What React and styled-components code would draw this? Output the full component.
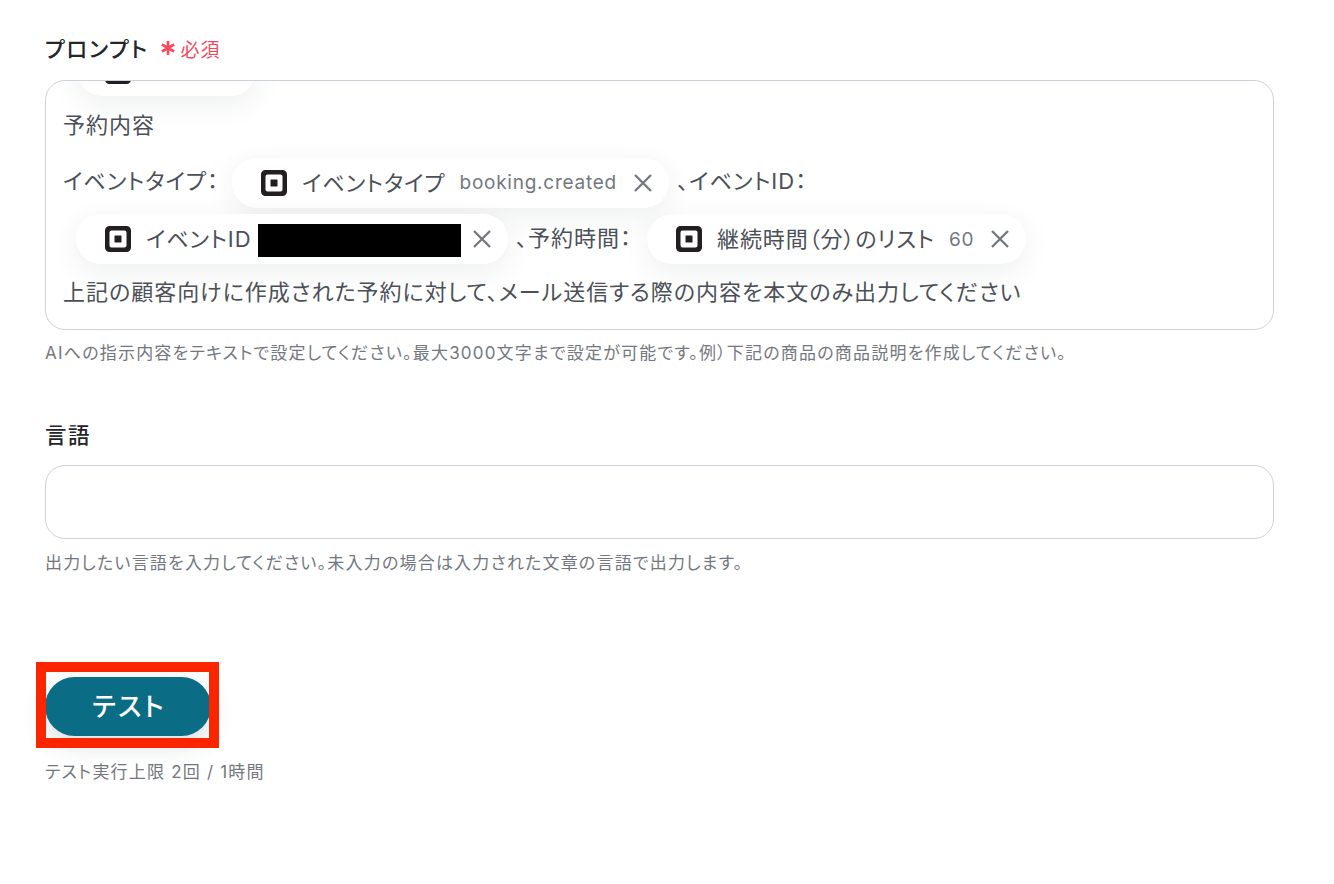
import React from 'react';
import styled, { createGlobalStyle } from 'styled-components';

const Global = createGlobalStyle`
  html, body { margin: 0; background: #fff; }
  body { font-family: Inter, "Noto Sans CJK JP", sans-serif; font-feature-settings: "palt"; }
`;

const Page = styled.main`
  width: 1229px;
  padding: 35px 0 0 45px;
`;

const Field = styled.section`
  margin-bottom: ${p => p.$gap}px;
`;

const LabelRow = styled.div`
  display: flex;
  align-items: center;
  height: 28px;
  margin-bottom: ${p => p.$gap}px;
  gap: 11px;
`;

const Label = styled.label`
  padding-bottom: 3px;
  font-size: 21.5px;
  font-weight: 500;
  letter-spacing: 1.6px;
  color: #23262a;
`;

const Required = styled.span`
  display: flex;
  align-items: center;
  gap: 5px;
  padding-bottom: 2px;
  font-size: 19px;
  letter-spacing: 1px;
  color: #f8485f;
`;

const Editor = styled.div`
  box-sizing: border-box;
  height: ${p => p.$height}px;
  border: 1px solid #cdd2da;
  border-radius: 20px;
  overflow: hidden;
  padding: 0 17px;
`;

const Line = styled.div`
  display: flex;
  align-items: center;
  height: ${p => p.$height}px;
  font-size: 22px;
  letter-spacing: 1px;
  color: #4b5057;
  white-space: nowrap;
`;

// the CJK glyphs sit low in their line box, so text is lifted a little against the chips
const LineText = styled.span`
  padding-bottom: ${p => p.$lift}px;
`;

const Chip = styled.span`
  display: inline-flex;
  align-items: center;
  box-sizing: border-box;
  height: 50px;
  width: ${p => p.$width}px;
  margin: 0 ${p => p.$right || 8}px 0 ${p => p.$left || 14}px;
  padding-left: 29px;
  border-radius: 25px;
  background: #fff;
  box-shadow: 0 8px 28px rgba(40, 50, 60, 0.08);
  font-size: 22px;
  letter-spacing: 0.9px;
  flex: none;
`;

const ClippedChip = styled(Chip)`
  display: flex;
  margin: -35px 0 0 14px;
  padding-left: 28px;
`;

const ChipName = styled.span`
  margin-left: 15px;
  padding-bottom: 4px;
  color: #4b5057;
`;

const ChipValue = styled.span`
  margin-left: 14px;
  font-size: 19px;
  letter-spacing: 0.75px;
  color: #73787e;
`;

const Redacted = styled.span`
  width: 203px;
  height: 33px;
  margin: 3px 0 0 7px;
  background: #000;
`;

const Close = styled.svg`
  width: 18px;
  height: 18px;
  margin-left: auto;
  margin-right: 17px;
  flex: none;
  stroke: #73787e;
  stroke-width: 2.3;
  fill: none;
`;

const Hint = styled.p`
  margin: ${p => p.$top || 12}px 0 0;
  font-size: 17px;
  line-height: 22px;
  letter-spacing: 1.2px;
  color: #73787e;
`;

const ButtonWrap = styled.div`
  position: relative;
  width: 166px;
`;

const TestButton = styled.button`
  display: block;
  width: 166px;
  height: 59px;
  padding: 0 0 4px 2px;
  border: 0;
  border-radius: 30px;
  background: #0a6c85;
  box-shadow: 0 8px 24px rgba(40, 60, 70, 0.18);
  color: #fff;
  font: 500 26px Inter, "Noto Sans CJK JP", sans-serif;
  font-feature-settings: "palt";
  letter-spacing: 2.2px;
`;

const Highlight = styled.div`
  position: absolute;
  left: -9px;
  top: -15px;
  width: 183px;
  height: 86px;
  box-sizing: border-box;
  border: 10px solid #fb2600;
  pointer-events: none;
`;

const SquareLogo = () => (
  <svg width="26" height="26" viewBox="0 0 26 26" style={{ flex: 'none' }}>
    <path
      fillRule="evenodd"
      fill="#231f20"
      d="M4.5 0h17A4.5 4.5 0 0 1 26 4.5v17a4.500 4.500 0 0 1-4.500 4.500h-17A4.500 4.500 0 0 1 0 21.500v-17A4.500 4.500 0 0 1 4.500 0zM6.500 4.500A2 2 0 0 0 4.500 6.500v13a2 2 0 0 0 2 2h13a2 2 0 0 0 2-2v-13a2 2 0 0 0-2-2zM10 9.500h6a.5.5 0 0 1 .5.5v6a.5.5 0 0 1-.5.5h-6a.5.5 0 0 1-.5-.5v-6a.5.5 0 0 1 .5-.5z"
    />
  </svg>
);

const CloseIcon = () => (
  <Close viewBox="0 0 18 18">
    <path d="M1 1l16 16M17 1L1 17" />
  </Close>
);

export default function App() {
  return (
    <Page>
      <Global />
      <Field $gap={57}>
        <LabelRow $gap={17}>
          <Label>プロンプト</Label>
          <Required>
            <svg width="16" height="16" viewBox="0 0 16 16" stroke="#f8485f" strokeWidth="2.6">
              <path d="M8 1v14M1.900 4.500l12.200 7M14.100 4.500l-12.200 7" />
            </svg>
            必須
          </Required>
        </LabelRow>
        <Editor $height={250}>
          <ClippedChip $width={179} as="div">
            <SquareLogo />
          </ClippedChip>
          <Line $height={58}>
            <LineText $lift={4}>予約内容</LineText>
          </Line>
          <Line $height={57}>
            <LineText $lift={7}>イベントタイプ：</LineText>
            <Chip $width={437} $left={13} $right={8}>
              <SquareLogo />
              <ChipName>イベントタイプ</ChipName>
              <ChipValue>booking.created</ChipValue>
              <CloseIcon />
            </Chip>
            <LineText $lift={7}>、イベントID：</LineText>
          </Line>
          <Line $height={56}>
            <Chip $width={432} $left={13} $right={8}>
              <SquareLogo />
              <ChipName>イベントID</ChipName>
              <Redacted />
              <CloseIcon />
            </Chip>
            <LineText $lift={6}>、予約時間：</LineText>
            <Chip $width={379} $left={15}>
              <SquareLogo />
              <ChipName>継続時間（分）のリスト</ChipName>
              <ChipValue>60</ChipValue>
              <CloseIcon />
            </Chip>
          </Line>
          <Line $height={50}>
            <LineText $lift={4}>上記の顧客向けに作成された予約に対して、メール送信する際の内容を本文のみ出力してください</LineText>
          </Line>
        </Editor>
        <Hint>AIへの指示内容をテキストで設定してください。最大3000文字まで設定が可能です。例）下記の商品の商品説明を作成してください。</Hint>
      </Field>
      <Field $gap={103}>
        <LabelRow $gap={16}>
          <Label>言語</Label>
        </LabelRow>
        <Editor $height={74} />
        <Hint $top={13}>出力したい言語を入力してください。未入力の場合は入力された文章の言語で出力します。</Hint>
      </Field>
      <ButtonWrap>
        <TestButton>テスト</TestButton>
        <Highlight />
      </ButtonWrap>
      <Hint $top={25}>テスト実行上限 2回 / 1時間</Hint>
    </Page>
  );
}
